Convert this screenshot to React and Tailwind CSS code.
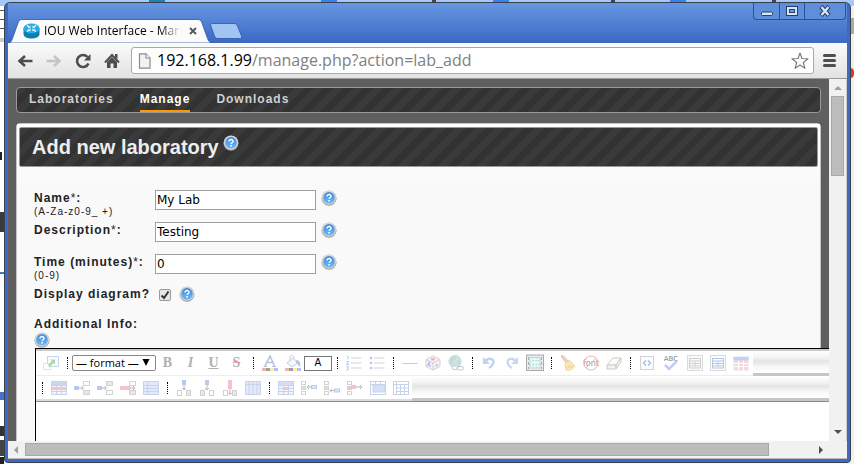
import React from "react";

const HATCH =
  "bg-[repeating-linear-gradient(135deg,#3a3a3a_0px,#3a3a3a_7px,#323232_7px,#323232_14px)]";

function Router({ className }) {
  return (
    <svg viewBox="0 0 17 16" className={className} aria-hidden="true">
      <path d="M.5 5v6c0 6 16 6 16 0V5z" fill="#0b7fb0" />
      <ellipse cx="8.500" cy="5.500" rx="8" ry="5" fill="#27aee4" />
      <path d="M4 2.500l3 2M13 2.500l-3 2M4 8.500l3-2M13 8.500l-3-2" stroke="#fff" strokeWidth="1.300" />
      <path d="M7.300 2.700v2H5M9.700 2.700v2H12M5 6.300h2.300v2M12 6.300H9.700v2" stroke="#e8f7ff" strokeWidth=".6" fill="none" />
    </svg>
  );
}

function Help() {
  return (
    <button type="button" aria-label="Help" className="block size-4 shrink-0">
      <svg viewBox="0 0 16 16" className="size-4" aria-hidden="true">
        <defs>
          <linearGradient id="helpBlue" x1="0" y1="0" x2="0" y2="1">
            <stop offset="0" stopColor="#3f8ade" />
            <stop offset="1" stopColor="#6fb9f7" />
          </linearGradient>
        </defs>
        <circle cx="8" cy="8.300" r="7.500" fill="#9c9c9c" />
        <circle cx="8" cy="7.600" r="7.200" fill="#d4d4d4" />
        <circle cx="8" cy="7.800" r="5.800" fill="url(#helpBlue)" />
        <path d="M6 6.400c0-2.500 4.100-2.400 4-.1 0 1.400-1.900 1.400-1.900 2.700" stroke="#fff" strokeWidth="1.400" fill="none" />
        <rect x="7.300" y="10" width="1.600" height="1.500" fill="#fff" />
      </svg>
    </button>
  );
}

function NavIcon({ label, children, disabled }) {
  return (
    <button type="button" aria-label={label} disabled={disabled} className={disabled ? "text-[#c4c4c4]" : "text-[#4d4d4d]"}>
      <svg viewBox="0 0 16 16" className="size-4" fill="none" stroke="currentColor" aria-hidden="true">
        {children}
      </svg>
    </button>
  );
}

function TitleBar() {
  return (
    <div className="flex h-10 shrink-0 items-start justify-between bg-linear-to-b from-[#6797e1] to-[#3c69c4]">
      <div className="flex h-full items-end">
        <div className="relative flex h-6 w-[206px] items-center pr-3 pl-[15px]">
          <svg viewBox="0 0 206 24" preserveAspectRatio="none" className="absolute inset-0 h-full w-full" aria-hidden="true">
            <path d="M0 24C3 24 3.500 22 5 18L10 4C11 1 12 .5 15 .5H189c3 0 4 .5 5 3.500l5 14c1.500 4 2 6 7 6z" fill="#fbfbfb" stroke="#2f55a0" strokeWidth=".8" />
          </svg>
          <Router className="relative h-4 w-[17px] shrink-0" />
          <span className="relative ml-1 w-[141px] font-['Open_Sans',sans-serif] text-[12px] leading-4 whitespace-nowrap text-black [mask-image:linear-gradient(90deg,#000_116px,transparent_138px)]">
            IOU Web Interface - Mar
          </span>
          <button type="button" aria-label="Close tab" className="relative ml-1">
            <svg viewBox="0 0 8 8" className="size-2" aria-hidden="true">
              <path d="M1 1l6 6M7 1L1 7" stroke="#555" strokeWidth="1.800" />
            </svg>
          </button>
        </div>
        <button type="button" aria-label="New tab" className="-ml-1 mb-1">
          <svg viewBox="0 0 32 16" className="h-4 w-8" aria-hidden="true">
            <path d="M2 .5H24c2 0 3 1 3.500 2.500l4 10c.5 1.500 0 2.500-2 2.500H8c-2 0-3-1-3.500-2.500L.8 3C.4 1.500.5.5 2 .5z" fill="#a2c4f2" stroke="#3a64b4" />
          </svg>
        </button>
      </div>
      <div className="mr-px flex h-[17px] rounded-b-sm border border-t-0 border-[#2c4f94] bg-[#5f8fdb]">
        <button type="button" aria-label="Minimize" className="flex w-[25px] items-center justify-center">
          <svg viewBox="0 0 12 12" className="size-3" aria-hidden="true">
            <rect x=".5" y="7" width="11" height="3.500" rx="1" fill="#d6e4fa" stroke="#27406f" />
          </svg>
        </button>
        <button type="button" aria-label="Maximize" className="flex w-[26px] items-center justify-center border-x border-[#2c4f94]">
          <svg viewBox="0 0 12 12" className="size-3" aria-hidden="true">
            <rect x=".5" y="1.500" width="11" height="9" fill="#d6e4fa" stroke="#27406f" />
            <rect x="3.500" y="4.500" width="5" height="3" fill="#6c99e0" stroke="#27406f" />
          </svg>
        </button>
        <button type="button" aria-label="Close window" className="flex w-10 items-center justify-center">
          <svg viewBox="0 0 12 12" className="size-3" aria-hidden="true">
            <path d="M2 1.500l8 9M10 1.500l-8 9" stroke="#27406f" strokeWidth="4.400" />
            <path d="M2.500 2l7 8M9.500 2l-7 8" stroke="#d6e4fa" strokeWidth="2.400" />
          </svg>
        </button>
      </div>
    </div>
  );
}

function Toolbar() {
  return (
    <div className="flex h-9 shrink-0 items-center border-b border-[#999] bg-linear-to-b from-[#fbfbfb] to-[#e2e2e2] pr-[11px] pl-[9px]">
      <div className="flex gap-[13px]">
        <NavIcon label="Back">
          <path d="M15.500 8H3M8 3L2.500 8 8 13" strokeWidth="2.600" />
        </NavIcon>
        <NavIcon label="Forward" disabled>
          <path d="M.5 8H13M8 3l5.500 5L8 13" strokeWidth="2.600" />
        </NavIcon>
        <NavIcon label="Reload">
          <path d="M13.500 10.500A6 6 0 1 1 12.500 4" strokeWidth="2.600" />
          <path d="M15.500 1v6.500H9z" fill="currentColor" stroke="none" />
        </NavIcon>
        <NavIcon label="Home">
          <path d="M1 9.500L8 2l7 7.500" strokeWidth="2" />
          <path d="M3 9l5-5 5 5v6H9.500v-4.500h-3V15H3zM11 1h2.500v5L11 4z" fill="currentColor" stroke="none" />
        </NavIcon>
      </div>
      <div className="ml-[11px] flex h-[27px] flex-1 items-center rounded-[3px] border border-[#a9a9a9] bg-white px-1">
        <svg viewBox="0 0 14 16" className="ml-0.5 h-4 w-3.5 shrink-0" aria-hidden="true">
          <path d="M1.500.8H8l4 4.200v10.200H1.500z" fill="#f3f3f3" stroke="#8b8b8b" strokeWidth="1.200" />
          <path d="M8 .8V5h4" fill="#fff" stroke="#8b8b8b" strokeWidth="1.200" />
        </svg>
        <div className="ml-[5px] flex-1 pb-0.5 font-['Open_Sans',sans-serif] text-[16px] leading-6 whitespace-nowrap text-[#808080]">
          <span className="text-black">192.168.1.99</span>/manage.php?action=lab_add
        </div>
        <button type="button" aria-label="Bookmark">
          <svg viewBox="0 0 18 18" className="size-[18px]" aria-hidden="true">
            <path d="M9 1l2 5.500 6 .2-4.700 3.800 1.700 5.800L9 13l-5 3.300 1.700-5.800L1 6.700l6-.2z" fill="#fff" stroke="#777" strokeWidth="1.100" strokeLinejoin="round" />
          </svg>
        </button>
      </div>
      <button type="button" aria-label="Menu" className="ml-[9px] flex flex-col gap-0.5">
        <span className="h-[3px] w-[13px] rounded-xs bg-[#505050]" />
        <span className="h-[3px] w-[13px] rounded-xs bg-[#505050]" />
        <span className="h-[3px] w-[13px] rounded-xs bg-[#505050]" />
      </button>
    </div>
  );
}

function SiteNav() {
  return (
    <nav className={"flex h-[26px] gap-[26px] rounded border border-[#999] px-3 text-[12px] font-bold tracking-[1px] text-[#d0d0d0] " + HATCH}>
      <a href="#laboratories" className="leading-[22px]">Laboratories</a>
      <a href="#manage" className="h-6 border-b-2 border-[#f90] leading-[22px] text-white">Manage</a>
      <a href="#downloads" className="leading-[22px]">Downloads</a>
    </nav>
  );
}

function Field({ id, label, hint, value }) {
  return (
    <div className="flex h-8">
      <label htmlFor={id} className="w-[121px] text-[12px] leading-4 font-bold tracking-[1px]">
        {label}<span className="font-normal">*</span>:
        {hint && <span className="block text-[10px] leading-3 font-normal">{hint}</span>}
      </label>
      <input
        id={id}
        type="text"
        defaultValue={value}
        className="h-5 w-[161px] border border-[#a0a0a0] bg-white px-px font-['DejaVu_Sans',sans-serif] text-[12px] text-black"
      />
      <span className="ml-[5px]"><Help /></span>
    </div>
  );
}

function Tool({ label, wide, children }) {
  return (
    <button type="button" aria-label={label} className={(wide ? "w-[25px]" : "w-[23px]") + " flex h-full shrink-0 items-center justify-center"}>
      <svg viewBox="0 0 16 16" className="size-4 overflow-visible" fill="none" aria-hidden="true">
        {children}
      </svg>
    </button>
  );
}

function Letter({ label, className, children }) {
  return (
    <button type="button" aria-label={label} className={"w-[23px] shrink-0 font-['Liberation_Serif',serif] text-[14px] leading-6 font-bold text-[#b0b0b0] " + className}>
      {children}
    </button>
  );
}

function Sep() {
  return (
    <span className="flex w-2.5 shrink-0 justify-center">
      <span className="h-3 w-px border-l border-dotted border-black" />
    </span>
  );
}

const BLUE = "#c6d3ea";
const GREY = "#d2d2d2";
const RED = "#f5c4c8";

function Grid({ head, row, cols, fill = "#f2f5fc" }) {
  return (
    <>
      <rect x=".5" y="1.500" width="15" height="13" fill={fill} stroke={BLUE} />
      <path d="M.5 5.500h15M.5 8.500h15M.5 11.500h15" stroke={BLUE} />
      {cols && <path d="M5.500 2v12M10.500 2v12" stroke={BLUE} />}
      {head && <rect x="1" y="2" width="14" height="3" fill={head} />}
      {row && <rect x="1" y="7" width="14" height="3" fill={row} />}
    </>
  );
}

function InsertRow({ below, remove }) {
  return (
    <>
      <rect x="9.500" y="1.500" width="6" height="4" fill={below ? "#e8e8e8" : "#fff"} stroke={GREY} />
      <rect x="9.500" y="10.500" width="6" height="4" fill={below ? "#fff" : "#e8e8e8"} stroke={GREY} />
      <rect x="0" y="6" width={remove ? 10 : 5} height="4" fill={remove ? RED : "#b9cbec"} />
      <path d={remove ? "M10 8h5M13 6l2 2-2 2" : "M5 8h4M7.500 6l2 2-2 2"} stroke="#b8b8b8" />
    </>
  );
}

function InsertCol({ after, remove }) {
  return (
    <>
      <rect x="1.500" y="10.500" width="4" height="5" fill={after ? "#e8e8e8" : "#fff"} stroke={GREY} />
      <rect x="10.500" y="10.500" width="4" height="5" fill={after ? "#fff" : "#e8e8e8"} stroke={GREY} />
      <rect x="6" y="0" width="4" height={remove ? 9 : 5} fill={remove ? RED : "#b9cbec"} />
      <path d={remove ? "M8 9v6M6 12.500l2 2 2-2" : "M8 5v5M6 8l2 2 2-2"} stroke="#b8b8b8" />
    </>
  );
}

function Cells({ down, remove }) {
  return (
    <>
      <rect x=".5" y="1.500" width="4" height="3" fill="#fff" stroke={GREY} />
      <rect x=".5" y="6.500" width="4" height="3" fill={remove ? RED : "#e2e2e2"} stroke={GREY} />
      <rect x=".5" y="11.500" width="4" height="3" fill="#fff" stroke={GREY} />
      {remove && <rect x="4" y="5" width="5" height="4" fill={RED} />}
      <path d={down ? "M10 10.500H6M8 8.500l-2 2 2 2" : remove ? "M9 7h6M13 5l2 2-2 2" : "M10 7H6M8 5L6 7l2 2"} stroke="#b8b8b8" />
      {!remove && <rect x="10.500" y={down ? 9 : 5.5} width="5" height="3" fill="#dde7f8" stroke="#b9cbec" />}
    </>
  );
}

const ROW_BG =
  "bg-[linear-gradient(#ffffff_0%,#f4f4f4_25%,#e4e4e4_42%,#f6f6f6_62%,#ffffff_86%,#c6c6c6_90%,#c6c6c6_100%)]";

function Editor() {
  return (
    <div className="ml-px w-[130%] border-t border-l border-black bg-white">
      <div className="flex flex-col border-t-2 border-b border-t-[#cacaca] border-b-[#8a8a8a]">
        <div className={"flex h-[25px] shrink-0 " + ROW_BG}>
          <div className="flex items-center border-b border-[#ececec] bg-white pr-px pl-[3px]">
            <Tool label="Full screen">
              <path d="M4.500 1.500h11v10h-11z" fill="#fafcff" stroke={BLUE} />
              <path d="M.5 8.500h7v6h-7z" fill="#fff" stroke="#d6ecd0" />
              <path d="M5 10l4-4-2-1.500h5v5L10.500 8l-4 4z" fill="#a9dba0" />
            </Tool>
            <Sep />
            <span className="relative shrink-0">
              <select aria-label="Format" className="block h-4 w-[84px] appearance-none rounded-xs border border-[#888] bg-white px-[3px] font-['Open_Sans',sans-serif] text-[11px] leading-[14px] text-black">
                <option>— format —</option>
              </select>
              <svg viewBox="0 0 8 8" className="pointer-events-none absolute top-1 right-1.5 size-2" aria-hidden="true">
                <path d="M.5 0h7L4 7z" fill="#000" />
              </svg>
            </span>
            <Letter label="Bold" className="">B</Letter>
            <Letter label="Italic" className="italic">I</Letter>
            <Letter label="Underline" className="underline">U</Letter>
            <Letter label="Strikethrough" className="line-through decoration-[#f0a0a0]">S</Letter>
            <Sep />
            <Tool label="Text colour">
              <path d="M3 11L8 1l4.500 10M5 7.500h6" stroke="#b4c2dc" strokeWidth="1.600" />
              <path d="M1.500 11.500h3.500M10 11.500h4" stroke="#b4c2dc" />
              <rect y="13" width="4" height="3" fill="#f5b0b0" /><rect x="4" y="13" width="4" height="3" fill="#a0a0a0" />
              <rect x="8" y="13" width="4" height="3" fill="#f6efa8" /><rect x="12" y="13" width="4" height="3" fill="#bcbcf6" />
            </Tool>
            <Tool label="Fill colour">
              <path d="M2 8l6-5 5 5-6 4z" fill="#f3f6fb" stroke="#c4cddc" /><path d="M5 6V2c0-2 4-2 4 1" stroke="#ccc" />
              <path d="M11 5c4 0 5 3 4 7-2-1-2-4-4-4z" fill="#b4c8ec" />
              <rect y="13" width="4" height="3" fill="#f5b0b0" /><rect x="4" y="13" width="4" height="3" fill="#a0a0a0" />
              <rect x="8" y="13" width="4" height="3" fill="#f6efa8" /><rect x="12" y="13" width="4" height="3" fill="#bcbcf6" />
            </Tool>
            <button type="button" className="h-[15px] w-7 shrink-0 border border-[#777] bg-white font-['DejaVu_Sans',sans-serif] text-[10px] leading-3 text-black">A</button>
            <Sep />
            <Tool label="Numbered list">
              <path d="M5 3h10.500M5 8h10.500M5 13h10.500" stroke={GREY} />
              <path d="M1 1.500l1-.5v3.500M.5 6.500h2L.5 9.500h2.500M.5 11.500h2l-1 1.500 1 .5-.5 1.500H.5" stroke="#b4c8ec" />
            </Tool>
            <Tool label="Bulleted list">
              <path d="M5 3h10.500M5 8h10.500M5 13h10.500" stroke={GREY} />
              <circle cx="2" cy="3" r="1.300" fill="#b4c6ea" /><circle cx="2" cy="8" r="1.300" fill="#b4c6ea" /><circle cx="2" cy="13" r="1.300" fill="#b4c6ea" />
            </Tool>
            <Sep />
            <Tool label="Horizontal rule"><path d="M.5 8.500h15" stroke="#ccc" /></Tool>
            <Tool label="Insert object">
              <path d="M8 1l7 3.500v7L8 15l-7-3.500v-7z" fill="#f7f4f8" stroke="#d2d0d6" /><path d="M1 4.500L8 8l7-3.500M8 8v7" stroke="#d2d0d6" />
              <path d="M2.500 11l1.500-4 1.500 5M3 10h2" stroke="#b4b4f4" /><ellipse cx="8" cy="4.200" rx="2.200" ry="1.200" fill="#f4b0b2" /><path d="M9.500 11.500l4-2M11 8.500l1.500 3.500" stroke="#e0b8de" />
            </Tool>
            <Tool label="Insert link">
              <circle cx="7" cy="6.500" r="6" fill="#cfe0f4" stroke="#c4d4e6" /><path d="M4 2c3-1 5 0 4 2L5 6l1 4-3-2-1-3zM10 5l3 2-2 3-2-1z" fill="#bfe2b8" />
              <rect x="4" y="11" width="6" height="3.500" rx="1.700" fill="#fff" stroke="#c0c9d4" /><rect x="9" y="11.500" width="6.500" height="3.500" rx="1.700" stroke="#c0c9d4" />
            </Tool>
            <Sep />
            <Tool label="Undo"><path d="M4 6c5-4 10-2 8 3-1 2-2 3-4 4" stroke="#c0d0ee" strokeWidth="2.400" /><path d="M2 2v7h7z" fill="#c0d0ee" /></Tool>
            <Tool label="Redo"><path d="M12 6C7 2 2 4 4 9c1 2 2 3 4 4" stroke="#cad7f0" strokeWidth="2.400" /><path d="M14 2v7H7z" fill="#cad7f0" /></Tool>
            <Tool label="Toggle borders">
              <rect x="-.5" y="0" width="17" height="15.500" fill="#ececec" stroke="#aaa" /><rect x="3" y="2.500" width="10" height="10.500" fill="#eefaf8" stroke="#c4d4d0" />
              <path d="M6 2v12M10 2v12M2 5.500h12M2 9.500h12" stroke="#b4e4de" strokeDasharray="2 1" /><path d="M1.500 2v12M14.500 2v12" stroke="#aaa" strokeDasharray="3 2" />
            </Tool>
            <Sep />
            <Tool label="Clean up"><path d="M1 1l2-.5L8 6 6 8z" fill="#f3d0c0" stroke="#e2c4b4" /><path d="M5 9l4-4 6 6c-2 3-5 5-9 4z" fill="#fae9b0" stroke="#ecd8a0" /><path d="M8 13l2-3M11 13l1-2" stroke="#e0c88a" /></Tool>
            <Tool label="Remove fonts">
              <text x="8" y="11" textAnchor="middle" fontSize="8" fontFamily="DejaVu Sans" fill="#999">font</text>
              <circle cx="8" cy="8" r="7" stroke="#f4b0b0" /><path d="M3 13L13 3" stroke="#f4b0b0" />
            </Tool>
            <Tool label="Erase"><path d="M1 10l6-7h8l-5 7z" fill="#fffdfa" stroke="#ccc" /><path d="M1 10h9v4H1zM10 10l5-7v4l-5 7z" fill="#f9f0ea" stroke="#ccc" /></Tool>
            <Sep />
            <Tool label="Source"><rect x="1.500" y="1.500" width="13" height="13" fill="#fafcff" stroke={GREY} /><path d="M7 5.500L4.500 8 7 10.500M9 5.500L11.500 8 9 10.500" stroke="#a2bce0" strokeWidth="1.300" /></Tool>
            <Tool label="Spelling" wide>
              <text x="8" y="6" textAnchor="middle" fontSize="7" fontFamily="DejaVu Sans" fill="#888">ABC</text>
              <path d="M2 10l4 4 8-8" stroke="#c0cfee" strokeWidth="2.600" />
            </Tool>
            <Tool label="Page"><rect x=".5" y=".5" width="15" height="15" fill="#fafafa" stroke="#dcdcd8" /><path d="M2.500 3.500h11M2.500 6h11M2.500 8.500h11M2.500 11h11M2.500 13h11M2.500 3v10M13.500 3v10M8 6v5" stroke="#d0d0cc" /></Tool>
            <Tool label="Page properties"><rect x=".5" y=".5" width="15" height="15" fill="#fafcff" stroke="#d6dade" /><path d="M2.500 3.500h11M2.500 6h11M2.500 8.500h11M2.500 11h11M2.500 13h11M2.500 3v10M13.500 3v10M8 6v5" stroke="#b4c8e2" /></Tool>
            <Tool label="Insert table"><rect x="1" y="2" width="14" height="13" fill="#f8d8d8" stroke="#e4e0f0" /><path d="M5.500 5v10M10.500 5v10M1 8.500h14M1 11.500h14" stroke="#fff" /><rect x=".5" y="2" width="15" height="3.500" fill="#c2d2f4" /></Tool>
          </div>
        </div>
        <div className={"flex h-[25px] shrink-0 " + ROW_BG}>
          <div className="flex items-center border-b-2 border-[#dcdcdc] bg-white pl-px">
            <Sep />
            <Tool label="Row properties"><Grid head="#c9d6ee" row={RED} cols /></Tool>
            <Tool label="Insert row before"><InsertRow /></Tool>
            <Tool label="Insert row after"><InsertRow below /></Tool>
            <Tool label="Delete row"><InsertRow remove /></Tool>
            <Tool label="Split row"><Grid fill="#e2eafa" /><path d="M4.500 2v12" stroke={BLUE} /></Tool>
            <Sep />
            <Tool label="Insert column before"><InsertCol /></Tool>
            <Tool label="Insert column after"><InsertCol after /></Tool>
            <Tool label="Delete column"><InsertCol remove /></Tool>
            <Tool label="Split column"><rect x=".5" y="1.500" width="15" height="13" fill="#e2eafa" stroke={BLUE} /><path d="M.5 4.500h15M4 2v12M8 2v12M12 2v12" stroke={BLUE} /></Tool>
            <Sep />
            <Tool label="Cell properties"><Grid head="#d4dff2" cols /><rect x="6" y="7" width="4" height="3" fill={RED} /></Tool>
            <Tool label="Insert cell before"><Cells /></Tool>
            <Tool label="Insert cell after"><Cells down /></Tool>
            <Tool label="Delete cell"><Cells remove /></Tool>
            <Tool label="Merge cells"><rect x=".5" y="1.500" width="15" height="13" fill="#fff" stroke={BLUE} /><path d="M.5 4.500h15M5.500 2v3M10.500 2v3" stroke={BLUE} /><rect x="3" y="5" width="12" height="7" fill="#d4e0f8" stroke={BLUE} /></Tool>
            <Tool label="Split cell"><rect x=".5" y="1.500" width="15" height="13" fill="#fff" stroke={BLUE} /><path d="M.5 4.500h15M3.500 2v12M7.500 4v10M11.500 4v10M3 8h12M3 11.500h12" stroke={BLUE} /></Tool>
          </div>
        </div>
      </div>
      <textarea aria-label="Additional Info" className="block h-48 w-full resize-none bg-white" />
    </div>
  );
}

function LabForm() {
  return (
    <main className="mt-[10px] rounded-t border border-[#c4c4c4] bg-[#f9f9f9]">
      <div className="bg-linear-to-b from-white to-[#f9f9f9] px-0.5 pt-[3px] pb-[23px]">
        <h1 className={"flex h-10 rounded-xs border border-[#999] pl-3 text-[20px] leading-[38px] font-bold text-[#eee] " + HATCH}>
          Add new laboratory
          <span className="mt-[7px] ml-1"><Help /></span>
        </h1>
      </div>
      <form className="pl-[17px] text-[#222]">
        <Field id="name" label="Name" hint="(A-Za-z0-9_ +)" value="My Lab" />
        <Field id="description" label="Description" value="Testing" />
        <Field id="time" label="Time (minutes)" hint="(0-9)" value="0" />
        <div className="flex h-[30px]">
          <label htmlFor="diagram" className="w-[125px] text-[12px] leading-4 font-bold tracking-[1px] whitespace-nowrap">Display diagram?</label>
          <span className="relative mt-[3px] size-3">
            <input id="diagram" type="checkbox" defaultChecked className="peer block size-3 appearance-none rounded-xs border border-[#999] bg-[#e6e6e6]" />
            <svg viewBox="0 0 12 12" className="pointer-events-none absolute inset-0 hidden size-3 peer-checked:block" aria-hidden="true">
              <path d="M2.500 6.500L5 9l4.500-6.500" fill="none" stroke="#333" strokeWidth="2" />
            </svg>
          </span>
          <span className="ml-2"><Help /></span>
        </div>
        <div className="text-[12px] leading-4 font-bold tracking-[1px]">Additional Info:</div>
        <Help />
        <Editor />
      </form>
    </main>
  );
}

function Arrow({ d, color }) {
  return (
    <svg viewBox="0 0 8 8" className="size-2 shrink-0" aria-hidden="true">
      <path d={d} fill={color} />
    </svg>
  );
}

function Backdrop() {
  return (
    <div className="absolute inset-0 flex flex-col" aria-hidden="true">
      <div className="flex h-1.5 items-start bg-[#a5c8f6] pl-[149px]">
        <i className="h-0.5 w-4 bg-[#1684b4]" />
        <i className="ml-[156px] h-0.5 w-4 bg-[#3d7ff0]" />
        <i className="ml-[95px] h-0.5 w-1 bg-[#444]" />
        <i className="ml-[57px] h-0.5 w-4 bg-[#3d7ff0]" />
        <i className="ml-[102px] h-0.5 w-1 bg-[#444]" />
        <i className="ml-[55px] h-0.5 w-4 bg-[#3d7ff0]" />
        <i className="ml-[86px] h-0.5 w-1 bg-[#444]" />
      </div>
      <div className="flex flex-1 justify-between bg-[#f6f6f6]">
        <div className="flex w-1 flex-col bg-white">
          <i className="mt-1 h-px bg-[#555]" /><i className="mt-2 h-px bg-[#555]" /><i className="mt-2 h-px bg-[#555]" /><i className="mt-[9px] h-1 bg-[#ccc]" />
          <i className="mt-[110px] h-2 w-0.5 bg-[#222]" />
          <i className="mt-[52px] h-5 bg-[#3b3b3b]" />
          <i className="mt-10 h-0.5 bg-[#4474cc]" />
          <i className="mt-[118px] h-2 bg-[#4474cc]" />
          <i className="mt-[26px] h-2.5 bg-[#333]" /><i className="mt-1 h-4 bg-[#444]" /><i className="mt-px flex-1 bg-[#222]" />
        </div>
        <div className="flex w-1 flex-col bg-[#f4f0f0]">
          <i className="mt-3 h-4 w-full bg-[#aaa]" /><i className="mt-[34px] h-2.5 w-full rounded-r-full bg-[#e2332c]" />
        </div>
      </div>
    </div>
  );
}

export default function App() {
  return (
    <div className="relative flex h-screen flex-col overflow-hidden pt-0.5 pr-[3px] pb-px pl-1 font-['Liberation_Sans',Arial,sans-serif]">
      <Backdrop />
      <div className="relative flex min-h-0 flex-1 flex-col overflow-hidden rounded-t-md rounded-b-sm border border-[#3a3f4c] bg-[#3c6ac4] px-[3px] pb-[3px]">
        <TitleBar />
        <Toolbar />
        <div className="flex min-h-0 flex-1">
          <div className="min-w-0 flex-1 overflow-hidden bg-[#5f5f5f] p-2">
            <SiteNav />
            <LabForm />
          </div>
          <div className="flex w-[18px] shrink-0 flex-col items-center border-r border-[#ccc] bg-[#f1f1f1] pt-[5px] pb-[5px]">
            <Arrow d="M0 6h8L4 2z" color="#a0a0a0" />
            <div className="mt-1 h-20 w-[13px] border border-[#a8a8a8] bg-[#bcbcbc]" />
            <div className="flex-1" />
            <Arrow d="M0 2h8L4 6z" color="#505050" />
          </div>
        </div>
        <div className="flex h-[18px] shrink-0 items-center border-b border-[#bbb] bg-[#f1f1f1] pr-[22px] pl-1">
          <Arrow d="M6 0v8L2 4z" color="#a0a0a0" />
          <div className="mr-12 ml-[5px] h-[13px] flex-1 border border-[#a8a8a8] bg-[#bcbcbc]" />
          <Arrow d="M2 0v8l4-4z" color="#505050" />
        </div>
      </div>
    </div>
  );
}
